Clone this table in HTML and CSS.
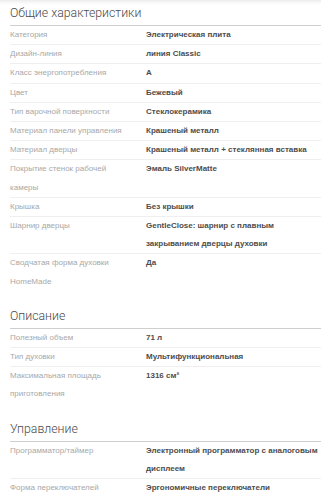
FILE: index.html
```html
<!DOCTYPE html>
<html lang="ru">
<head>
<meta charset="utf-8">
<title>Характеристики</title>
<link rel="stylesheet" href="styles.css">
</head>
<body>
<div class="page">
  <section class="group">
    <h2 class="group-title">Общие характеристики</h2>
    <div class="row"><div class="label">Категория</div><div class="value">Электрическая плита</div></div>
    <div class="row"><div class="label">Дизайн-линия</div><div class="value">линия Classic</div></div>
    <div class="row"><div class="label">Класс энергопотребления</div><div class="value">A</div></div>
    <div class="row"><div class="label">Цвет</div><div class="value">Бежевый</div></div>
    <div class="row"><div class="label">Тип варочной поверхности</div><div class="value">Стеклокерамика</div></div>
    <div class="row"><div class="label">Материал панели управления</div><div class="value">Крашеный металл</div></div>
    <div class="row"><div class="label">Материал дверцы</div><div class="value">Крашеный металл + стеклянная вставка</div></div>
    <div class="row"><div class="label">Покрытие стенок рабочей камеры</div><div class="value">Эмаль SilverMatte</div></div>
    <div class="row"><div class="label">Крышка</div><div class="value">Без крышки</div></div>
    <div class="row"><div class="label">Шарнир дверцы</div><div class="value">GentleClose: шарнир с плавным закрыванием дверцы духовки</div></div>
    <div class="row"><div class="label">Сводчатая форма духовки HomeMade</div><div class="value">Да</div></div>
  </section>
  <section class="group">
    <h2 class="group-title">Описание</h2>
    <div class="row"><div class="label">Полезный объем</div><div class="value">71 л</div></div>
    <div class="row"><div class="label">Тип духовки</div><div class="value">Мультифункциональная</div></div>
    <div class="row"><div class="label">Максимальная площадь приготовления</div><div class="value">1316 см²</div></div>
  </section>
  <section class="group">
    <h2 class="group-title">Управление</h2>
    <div class="row"><div class="label">Программатор/таймер</div><div class="value">Электронный программатор с аналоговым дисплеем</div></div>
    <div class="row"><div class="label">Форма переключателей</div><div class="value">Эргономичные переключатели</div></div>
  </section>
</div>
</body>
</html>
```
FILE: styles.css
```css
html, body {
  margin: 0;
  padding: 0;
}
body {
  font-family: "Liberation Sans", Arial, sans-serif;
  background: linear-gradient(to bottom, #ececec 0, #fafafa 3px, #ffffff 5px) no-repeat;
  background-color: #fff;
}
.page {
  padding-left: 10px;
}
.group + .group {
  margin-top: 12px;
}
.group-title {
  margin: 0;
  padding: 3px 0 2px;
  font-family: Roboto, "Liberation Sans", sans-serif;
  font-weight: 300;
  font-size: 12.3px;
  line-height: 20px;
  color: #4a4a4a;
  border-bottom: 1px solid #cfcfcf;
}
.row {
  display: grid;
  grid-template-columns: 136px 1fr;
  font-size: 8px;
  line-height: 18.2px;
  border-top: 1px solid #efefef;
}
.group-title + .row {
  border-top: 0;
}
.label {
  color: #a8a8a8;
  padding-right: 16px;
}
.value {
  color: #4d4d4d;
  font-weight: bold;
  padding-right: 3px;
}
```
